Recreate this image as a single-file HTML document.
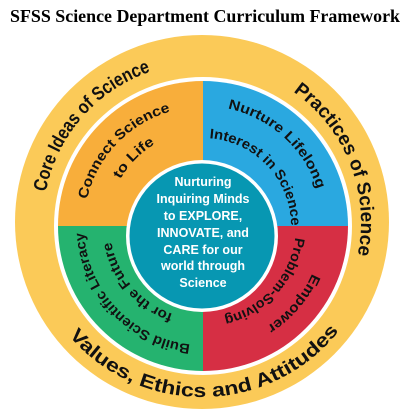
<!DOCTYPE html>
<html><head><meta charset="utf-8"><style>
html,body{margin:0;padding:0;background:#fff;width:407px;height:416px;overflow:hidden}
svg{display:block}
.o{font-family:"Liberation Sans",sans-serif;font-weight:bold;font-size:19px;fill:#111}
.i{font-family:"Liberation Sans",sans-serif;font-weight:bold;font-size:14px;fill:#111}
.c{font-family:"Liberation Sans",sans-serif;font-weight:bold;font-size:12.5px;fill:#fff}
</style></head><body>
<svg width="407" height="416" viewBox="0 0 407 416" xmlns="http://www.w3.org/2000/svg">
<text x="205" y="22" text-anchor="middle" textLength="390" lengthAdjust="spacingAndGlyphs" style="font-family:'Liberation Serif',serif;font-weight:bold;font-size:18px;fill:#000">SFSS Science Department Curriculum Framework</text>
<circle cx="202" cy="222" r="187" fill="#FBCA58"/>
<circle cx="203" cy="226" r="149" fill="#fff"/>
<clipPath id="d"><circle cx="203" cy="226" r="145"/></clipPath>
<g clip-path="url(#d)">
<rect x="0" y="0" width="203" height="226" fill="#F8AE3B"/>
<rect x="203" y="0" width="204" height="226" fill="#2AA8E0"/>
<rect x="203" y="226" width="204" height="200" fill="#D62F44"/>
<rect x="0" y="226" width="203" height="200" fill="#25B36F"/>
</g>
<circle cx="202" cy="236" r="76" fill="#fff"/>
<circle cx="202" cy="236" r="72.5" fill="#0797B2"/>
<defs>
<path id="core"/><path id="prac"/><path id="vals"/>
<path id="conn"/><path id="life"/><path id="nurt"/><path id="intr"/>
<path id="empw"/><path id="prob"/><path id="buil"/><path id="futr"/>
</defs>
<text class="o"><textPath id="t_core" href="#core" startOffset="50%" text-anchor="middle">Core Ideas of Science</textPath></text>
<text class="o"><textPath id="t_prac" href="#prac" startOffset="50%" text-anchor="middle">Practices of Science</textPath></text>
<text class="o"><textPath id="t_vals" href="#vals" startOffset="50%" text-anchor="middle">Values, Ethics and Attitudes</textPath></text>
<text class="i"><textPath id="t_conn" href="#conn" startOffset="50%" text-anchor="middle">Connect Science</textPath></text>
<text class="i"><textPath id="t_life" href="#life" startOffset="50%" text-anchor="middle">to Life</textPath></text>
<text class="i"><textPath id="t_nurt" href="#nurt" startOffset="50%" text-anchor="middle">Nurture Lifelong</textPath></text>
<text class="i"><textPath id="t_intr" href="#intr" startOffset="50%" text-anchor="middle">Interest in Science</textPath></text>
<text class="i"><textPath id="t_empw" href="#empw" startOffset="50%" text-anchor="middle">Empower</textPath></text>
<text class="i"><textPath id="t_prob" href="#prob" startOffset="50%" text-anchor="middle">Problem-Solving</textPath></text>
<text class="i"><textPath id="t_buil" href="#buil" startOffset="50%" text-anchor="middle">Build Scientific Literacy</textPath></text>
<text class="i"><textPath id="t_futr" href="#futr" startOffset="50%" text-anchor="middle">for the Future</textPath></text>
<g class="c" text-anchor="middle">
<text x="203" y="186">Nurturing</text>
<text x="203" y="203">Inquiring Minds</text>
<text x="203" y="220">to EXPLORE,</text>
<text x="203" y="237">INNOVATE, and</text>
<text x="203" y="254">CARE for our</text>
<text x="203" y="270">world through</text>
<text x="203" y="287">Science</text>
</g>
</svg>
<script>
function P(cx,cy,r,a){a=a*Math.PI/180;return[(cx+r*Math.sin(a)).toFixed(2),(cy-r*Math.cos(a)).toFixed(2)];}
var L=[
["core",202,222,159,-80,-18],
["prac",202,222,159,34,103],
["vals",202,222,175,231,127],
["conn",203,226,119,-78,-15],
["life",203,226,95,-61,-30],
["nurt",203,226,120,11,73],
["intr",203,226,88,3,91],
["empw",203,226,119,113,148],
["prob",203,226,93,96,168],
["buil",203,226,119,185,268],
["futr",203,226,93,198,261]];
L.forEach(function(e){var a=P(e[1],e[2],e[3],e[4]),b=P(e[1],e[2],e[3],e[5]);
var sw=e[5]>e[4]?1:0;var span=Math.abs(e[5]-e[4]);
document.getElementById(e[0]).setAttribute("d","M"+a[0]+" "+a[1]+" A"+e[3]+" "+e[3]+" 0 "+(span>180?1:0)+" "+sw+" "+b[0]+" "+b[1]);
var len=e[3]*span*Math.PI/180*0.97;
var t=document.getElementById("t_"+e[0]);t.setAttribute("textLength",len.toFixed(1));t.setAttribute("lengthAdjust","spacingAndGlyphs");});
</script>
</body></html>
